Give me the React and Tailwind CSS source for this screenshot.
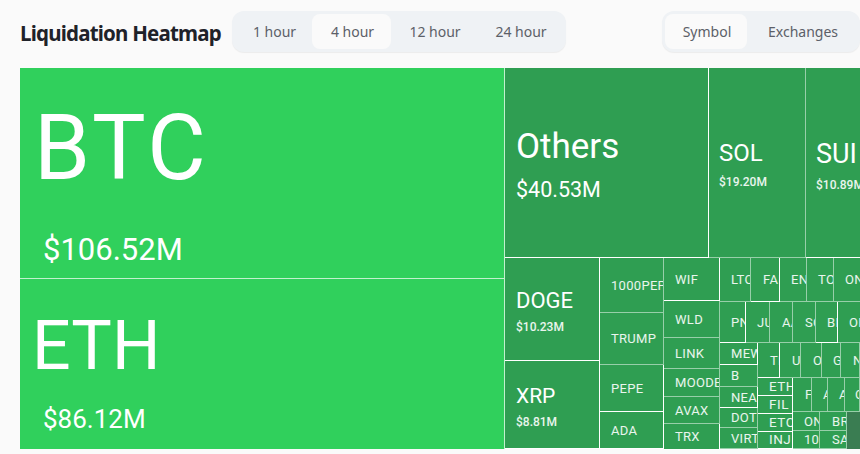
const W = "border-r border-b border-white";
const S = "border-r border-b border-white/50";

function Tile({ size, line = W, bg = "bg-[#2f9e52]", pad = "pl-[11px]", text = "text-[13px] leading-none font-normal tracking-[0.3px]", label, children }) {
  return (
    <div className={`${size} ${line} ${bg} ${pad} ${text} shrink-0 flex flex-col justify-center overflow-hidden whitespace-nowrap text-white/90`}>
      {label}
      {children}
    </div>
  );
}

const Big = "text-[13.5px] leading-none font-normal tracking-[0.5px]";

function Tabs({ items, active, width }) {
  return (
    <div className={`${width} h-[41px] flex items-center gap-0 rounded-xl bg-[#eff2f5] p-[3px] shadow-[0_1px_1px_rgba(0,0,0,0.06)]`}>
      {items.map((t) => (
        <div
          key={t.label}
          className={`${t.w} h-[35px] flex items-center justify-center pl-[2px] rounded-lg text-[14px] text-[#5c6068] ${t.label === active ? "bg-[#fafafa]" : ""}`}
        >
          {t.label}
        </div>
      ))}
    </div>
  );
}

export default function App() {
  return (
    <div className="w-[860px] h-[454px] overflow-hidden bg-[#fafafa] font-['Noto_Sans','Liberation_Sans',sans-serif]">
      <header className="h-[68px] flex items-start pl-[20px] pt-[11px]">
        <h1 className="w-[212px] h-[41px] flex items-center pt-[3px] text-[20.5px] font-bold tracking-[-0.8px] text-[#1f2229] whitespace-nowrap">Liquidation Heatmap</h1>
        <Tabs
          width="w-[334px]"
          active="4 hour"
          items={[
            { label: "1 hour", w: "w-[77px]" },
            { label: "4 hour", w: "w-[79px]" },
            { label: "12 hour", w: "w-[86px]" },
            { label: "24 hour", w: "w-[86px]" },
          ]}
        />
        <div className="w-[96px] shrink-0" />
        <Tabs
          width="w-[198px] shrink-0"
          active="Symbol"
          items={[
            { label: "Symbol", w: "w-[82px]" },
            { label: "Exchanges", w: "w-[110px]" },
          ]}
        />
      </header>

      <main className="ml-[20px] w-[900px] h-[381px] flex font-['Roboto','Liberation_Sans',sans-serif]">
        <section className="w-[485px] shrink-0 flex flex-col">
          <Tile size="h-[211px] w-[485px]" bg="bg-[#30d05c]" pad="pl-[16px]" text="font-normal" line="border-r border-b border-white/70">
            <div className="text-[90px] leading-[92px] tracking-[3px] text-white mt-[25px] ml-[-2px]">BTC</div>
            <div className="text-[31px] leading-[36px] text-white pl-[7px] mt-[37px]">$106.52M</div>
          </Tile>
          <Tile size="h-[170px] w-[485px]" bg="bg-[#30d05c]" pad="pl-[12px]" text="font-normal" line="border-r border-white/70">
            <div className="text-[68px] leading-[76px] text-white mt-[14px]">ETH</div>
            <div className="text-[26px] leading-[32px] text-white pl-[11px] mt-[19px]">$86.12M</div>
          </Tile>
        </section>

        <section className="w-[395px] shrink-0 flex flex-col">
          <div className="h-[190px] flex">
            <Tile size="w-[204px] h-[190px]" pad="pl-[11px]" text="font-normal">
              <div className="text-[35px] leading-[42px] text-white mt-[4px]">Others</div>
              <div className="text-[21.5px] leading-[26px] mt-[9px] text-white">$40.53M</div>
            </Tile>
            <Tile size="w-[97px] h-[190px]" line={S} pad="pl-[10px]" text="font-normal">
              <div className="text-[24px] leading-[30px] text-white mt-[2px]">SOL</div>
              <div className="text-[12px] leading-[16px] font-medium mt-[6px]">$19.20M</div>
            </Tile>
            <Tile size="w-[94px] h-[190px]" pad="pl-[10px]" text="font-normal">
              <div className="text-[27px] leading-[30px] text-white mt-[6px]">SUI</div>
              <div className="text-[12px] leading-[16px] font-medium mt-[8px]">$10.89M</div>
            </Tile>
          </div>

          <div className="h-[191px] flex">
            <div className="w-[95px] shrink-0 flex flex-col">
              <Tile size="w-[95px] h-[103px]" text="font-normal">
                <div className="text-[22px] leading-[26px] text-white mt-[4px]">DOGE</div>
                <div className="text-[12px] leading-[16px] font-medium mt-[5px]">$10.23M</div>
              </Tile>
              <Tile size="w-[95px] h-[88px]" text="font-normal">
                <div className="text-[21px] leading-[26px] text-white mt-[4px]">XRP</div>
                <div className="text-[12px] leading-[16px] font-medium mt-[5px]">$8.81M</div>
              </Tile>
            </div>

            <div className="w-[64px] shrink-0 flex flex-col">
              <Tile size="w-[64px] h-[55px]" line={S} label="1000PEPE" />
              <Tile size="w-[64px] h-[52px]" line={S} label="TRUMP" />
              <Tile size="w-[64px] h-[47px]" label="PEPE" />
              <Tile size="w-[64px] h-[37px]" label="ADA" />
            </div>

            <div className="w-[56px] shrink-0 flex flex-col">
              <Tile size="w-[56px] h-[43px]" label="WIF" />
              <Tile size="w-[56px] h-[37px]" line={S} label="WLD" />
              <Tile size="w-[56px] h-[31px]" line={S} label="LINK" />
              <Tile size="w-[56px] h-[28px]" line={S} label="MOODENG" />
              <Tile size="w-[56px] h-[27px]" line={S} label="AVAX" />
              <Tile size="w-[56px] h-[26px]" label="TRX" />
            </div>

            <div className="w-[180px] shrink-0 flex flex-col">
              <div className="h-[44px] flex">
                <Tile size="w-[31px] h-[44px]" line={S} label="LTC" />
                <Tile size="w-[29px] h-[44px]" pad="pl-[12px]" label="FAI" />
                <Tile size="w-[27px] h-[44px]" line={S} label="ENA" />
                <Tile size="w-[27px] h-[44px]" line={S} label="TON" />
                <Tile size="w-[40px] h-[44px]" line={S} label="ONDO" />
              </div>
              <div className="h-[41px] flex">
                <Tile size="w-[26px] h-[41px]" label="PNUT" />
                <Tile size="w-[24px] h-[41px]" line={S} label="JUP" />
                <Tile size="w-[23px] h-[41px]" line={S} pad="pl-[12px]" label="AAVE" />
                <Tile size="w-[23px] h-[41px]" line={S} pad="pl-[12px]" label="SOL" />
                <Tile size="w-[22px] h-[41px]" label="BIO" />
                <Tile size="w-[32px] h-[41px]" line={S} label="OP" />
              </div>
              <div className="h-[106px] flex">
                <div className="w-[38px] shrink-0 flex flex-col">
                  <Tile size="w-[38px] h-[22px]" label="MEW" />
                  <Tile size="w-[38px] h-[22px]" line={S} label="B" />
                  <Tile size="w-[38px] h-[21px]" label="NEAR" />
                  <Tile size="w-[38px] h-[20px]" line={S} label="DOT" />
                  <Tile size="w-[38px] h-[21px]" line={S} label="VIRTUAL" />
                </div>
                <div className="w-[102px] shrink-0 flex flex-col">
                  <div className="h-[35px] flex">
                    <Tile size="w-[22px] h-[35px]" pad="pl-[12px]" label="TIA" />
                    <Tile size="w-[21px] h-[35px]" line={S} pad="pl-[12px]" label="UNI" />
                    <Tile size="w-[21px] h-[35px]" line={S} pad="pl-[12px]" label="OM" />
                    <Tile size="w-[19px] h-[35px]" line={S} label="GMT" />
                    <Tile size="w-[19px] h-[35px]" line={S} pad="pl-[12px]" label="NOT" />
                  </div>
                  <div className="h-[71px] flex">
                    <div className="w-[35px] shrink-0 flex flex-col">
                      <Tile size="w-[35px] h-[18px]" text={Big} label="ETHFI" />
                      <Tile size="w-[35px] h-[18px]" text={Big} label="FIL" />
                      <Tile size="w-[35px] h-[18px]" text={Big} label="ETC" />
                      <Tile size="w-[35px] h-[17px]" text={Big} label="INJ" />
                    </div>
                    <div className="w-[67px] shrink-0 flex flex-col">
                      <div className="h-[34px] flex">
                        <Tile size="w-[19px] h-[34px]" line={S} pad="pl-[12px]" label="FET" />
                        <Tile size="w-[16px] h-[34px]" line={S} label="ARB" />
                        <Tile size="w-[17px] h-[34px]" line={S} label="APT" />
                        <Tile size="w-[15px] h-[34px]" line={S} pad="pl-[10px]" label="CRV" />
                      </div>
                      <div className="h-[37px] flex">
                        <div className="w-[27px] shrink-0 flex flex-col">
                          <Tile size="w-[27px] h-[19px]" line={S} label="ONDO" />
                          <Tile size="w-[27px] h-[18px]" line={S} label="1000" />
                        </div>
                        <div className="w-[27px] shrink-0 flex flex-col">
                          <Tile size="w-[27px] h-[19px]" line={S} pad="pl-[12px]" label="BRETT" />
                          <Tile size="w-[27px] h-[18px]" line={S} pad="pl-[12px]" label="SAND" />
                        </div>
                        <div className="w-[13px] h-[37px] shrink-0 bg-[#3a7d52]" />
                      </div>
                    </div>
                  </div>
                </div>
                <div className="w-[40px] shrink-0" />
              </div>
            </div>
          </div>
        </section>
      </main>
    </div>
  );
}
